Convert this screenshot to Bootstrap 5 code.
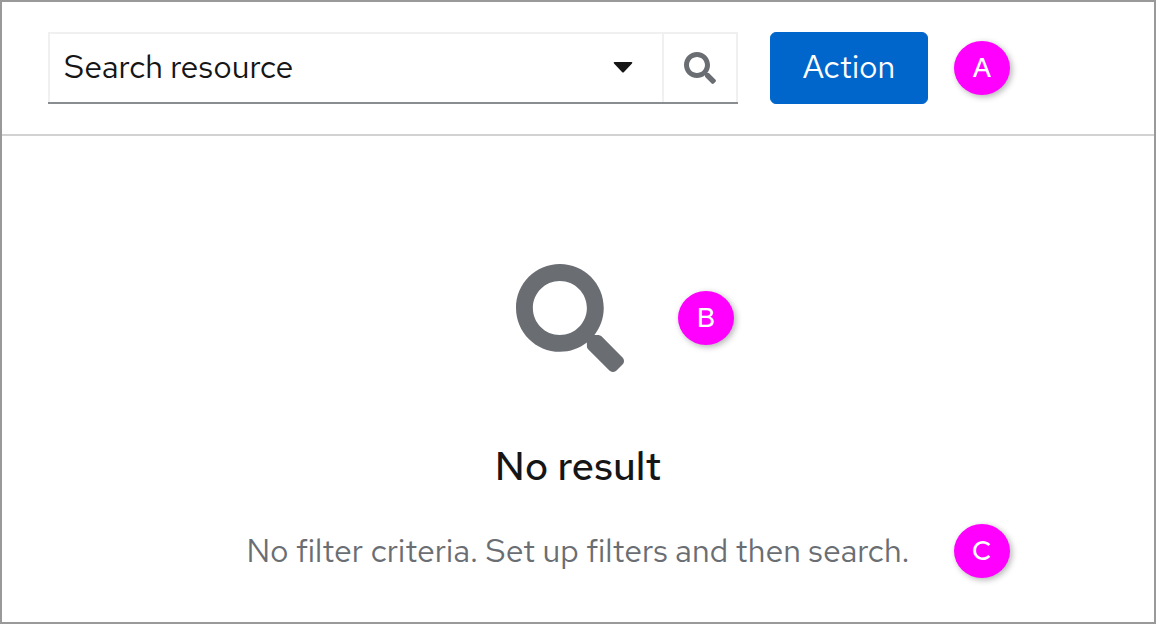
<!DOCTYPE html>
<html lang="en">
<head>
<meta charset="utf-8">
<meta name="viewport" content="width=device-width, initial-scale=1">
<title>Search resource</title>
<link href="https://cdn.jsdelivr.net/npm/bootstrap@5.3.0/dist/css/bootstrap.min.css" rel="stylesheet">
<style>
  body { font-family: "Red Hat Text", Inter, "Liberation Sans", sans-serif; color: #151515; background: #fff; }
  .frame { border: 2px solid #999; }
  .toolbar { padding: 30px 46px; border-bottom: 2px solid #d2d2d2; }
  .search-group { flex: 0 1 690px; height: 72px; border-bottom: 2px solid #8a8d90; }
  .select-cell { border: 2px solid #f0f0f0; border-width: 2px 0 0 2px; }
  .resource-select { padding: 0 64px 2px 14px; font-size: 32px; line-height: 40px; color: #151515; appearance: none; }
  .caret { right: 29px; }
  .search-btn { width: 76px; border: 2px solid #f0f0f0; border-bottom: 0; color: #6a6e73; }
  .action-btn { --bs-btn-bg: #06c; --bs-btn-border-color: #06c; --bs-btn-hover-bg: #004080; width: 158px; height: 72px; margin-left: 32px; padding: 0 0 2px; border-radius: 6px; font-size: 32px; line-height: 40px; }
  .marker { width: 56px; height: 54px; border-radius: 50%; background: #f0f; color: #fff; font-size: 27px; font-weight: 500; line-height: 32px; box-shadow: 2px 2px 6px rgba(0, 0, 0, .3); }
  .toolbar .marker { margin-left: 26px; }
  .empty-state { padding-top: 128px; padding-bottom: 48px; }
  .empty-icon { margin-right: 16px; color: #6a6e73; }
  .empty-icon .marker { left: 100%; margin-left: 54px; }
  .empty-title { margin: 70px 0 0; font-size: 40px; line-height: 48px; font-weight: 500; }
  .empty-text { margin-top: 40px; font-size: 32px; line-height: 42px; color: #6a6e73; }
  .empty-text .marker { left: 100%; margin-left: 44px; }
</style>
</head>
<body>
<main class="frame min-vh-100">
  <form class="toolbar d-flex align-items-center">
    <div class="search-group d-flex">
      <div class="select-cell position-relative flex-grow-1 d-flex">
        <select class="resource-select w-100 border-0 bg-transparent" aria-label="Search resource">
          <option>Search resource</option>
        </select>
        <svg class="caret position-absolute top-50 translate-middle-y pe-none" width="20" height="12" viewBox="0 0 20 12" aria-hidden="true"><path fill="#151515" d="M1.5 0h17q1.500.3.5 1.600l-8 8.500q-1 1-2 0l-8-8.500q-1-1.300.5-1.600z"/></svg>
      </div>
      <button type="button" class="search-btn btn rounded-0 p-0 d-flex align-items-center justify-content-center" aria-label="Search">
        <svg width="32" height="32" viewBox="0 0 512 512" fill="currentColor" aria-hidden="true"><path d="M505 442.7L405.3 343c-4.500-4.500-10.600-7-17-7H372c27.600-35.300 44-79.700 44-128C416 93.100 322.900 0 208 0S0 93.100 0 208s93.100 208 208 208c48.300 0 92.700-16.400 128-44v16.300c0 6.400 2.500 12.500 7 17l99.700 99.700c9.400 9.400 24.600 9.400 33.900 0l28.300-28.300c9.400-9.400 9.400-24.600.1-34zM208 336c-70.700 0-128-57.200-128-128 0-70.700 57.200-128 128-128 70.700 0 128 57.200 128 128 0 70.700-57.200 128-128 128z"/></svg>
      </button>
    </div>
    <button type="button" class="action-btn btn btn-primary flex-shrink-0">Action</button>
    <span class="marker flex-shrink-0 d-flex align-items-center justify-content-center">A</span>
  </form>
  <section class="empty-state d-flex flex-column align-items-center text-center">
    <div class="empty-icon position-relative">
      <svg class="d-block" width="108" height="108" viewBox="0 0 512 512" fill="currentColor" aria-hidden="true"><path d="M505 442.7L405.3 343c-4.500-4.500-10.600-7-17-7H372c27.600-35.300 44-79.700 44-128C416 93.100 322.900 0 208 0S0 93.100 0 208s93.100 208 208 208c48.300 0 92.700-16.400 128-44v16.300c0 6.400 2.500 12.500 7 17l99.700 99.700c9.400 9.400 24.600 9.400 33.900 0l28.300-28.300c9.400-9.400 9.400-24.600.1-34zM208 336c-70.700 0-128-57.200-128-128 0-70.700 57.200-128 128-128 70.700 0 128 57.200 128 128 0 70.700-57.200 128-128 128z"/></svg>
      <span class="marker position-absolute top-50 translate-middle-y d-flex align-items-center justify-content-center">B</span>
    </div>
    <h1 class="empty-title">No result</h1>
    <p class="empty-text position-relative mb-0">No filter criteria. Set up filters and then search.
      <span class="marker position-absolute top-50 translate-middle-y d-flex align-items-center justify-content-center">C</span>
    </p>
  </section>
</main>
<script src="https://cdn.jsdelivr.net/npm/bootstrap@5.3.0/dist/js/bootstrap.bundle.min.js"></script>
</body>
</html>
